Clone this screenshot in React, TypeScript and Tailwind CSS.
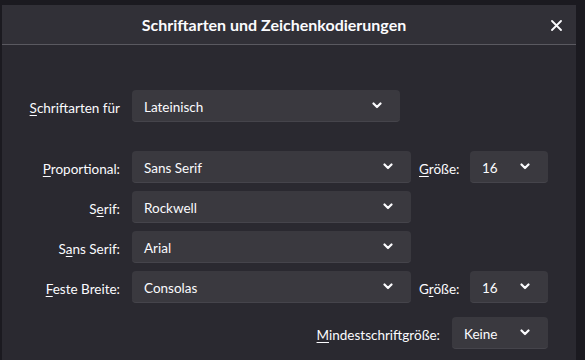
import React from "react";

function Chevron() {
  return (
    <svg width="10" height="7" viewBox="0 0 10 7" className="shrink-0">
      <polyline points="1.5,1.5 5,5 8.5,1.5" fill="none" stroke="#fbfbfe" strokeWidth="2.2" strokeLinecap="round" strokeLinejoin="round" />
    </svg>
  );
}

function Select({ value, w }: { value: string; w: string }) {
  return (
    <div className={`${w} h-[32px] shrink-0 flex items-center justify-between pl-[12px] pr-[18px] bg-[#3a393f] rounded-[4px] border-b border-[#45444b] text-[#fbfbfe]`}>
      <span className="pt-[4px]">{value}</span>
      <Chevron />
    </div>
  );
}

function U({ children }: { children: React.ReactNode }) {
  return <span className="underline underline-offset-[2px] decoration-[1px]">{children}</span>;
}

export default function App() {
  return (
    <div
      className="w-[585px] h-[360px] bg-[#1b1a20] overflow-hidden text-[13.5px] text-[#fbfbfe]"
      style={{ fontFamily: 'Lato, "Noto Sans", sans-serif' }}
    >
      <div className="ml-[2px] mt-[5px] w-[574px] h-[355px] bg-[#2a2930] flex flex-col">
        <div className="h-[40px] shrink-0 relative flex items-center justify-center pr-[30px] bg-[#313037] border-b border-[#5a5960]">
          <span className="text-[16px] font-bold pt-[1px]">Schriftarten und Zeichenkodierungen</span>
          <svg className="absolute right-[14px] top-[15px]" width="11" height="11" viewBox="0 0 11 11">
            <path d="M1 1L10 10M10 1L1 10" stroke="#fbfbfe" strokeWidth="1.8" strokeLinecap="round" />
          </svg>
        </div>
        <div className="flex flex-col pt-[45px]">
          <div className="flex items-center gap-[12px]">
            <div className="w-[118px] text-right pt-[4px]"><U>S</U>chriftarten für</div>
            <Select value="Lateinisch" w="w-[268px]" />
          </div>
          <div className="flex flex-col gap-[8px] mt-[29px]">
            <div className="flex items-center">
              <div className="w-[118px] text-right mr-[12px] pt-[4px]"><U>P</U>roportional:</div>
              <Select value="Sans Serif" w="w-[279px]" />
              <div className="ml-[8px] w-[51px] pt-[4px]"><U>G</U>röße:</div>
              <Select value="16" w="w-[78px]" />
            </div>
            <div className="flex items-center">
              <div className="w-[118px] text-right mr-[12px] pt-[4px]">S<U>e</U>rif:</div>
              <Select value="Rockwell" w="w-[279px]" />
            </div>
            <div className="flex items-center">
              <div className="w-[118px] text-right mr-[12px] pt-[4px]">S<U>a</U>ns Serif:</div>
              <Select value="Arial" w="w-[279px]" />
            </div>
            <div className="flex items-center">
              <div className="w-[118px] text-right mr-[12px] pt-[4px]"><U>F</U>este Breite:</div>
              <Select value="Consolas" w="w-[279px]" />
              <div className="ml-[8px] w-[51px] pt-[4px]">G<U>r</U>öße:</div>
              <Select value="16" w="w-[78px]" />
            </div>
          </div>
          <div className="flex items-center justify-end gap-[12px] pr-[28px] mt-[14px]">
            <div className="pt-[4px]"><U>M</U>indestschriftgröße:</div>
            <Select value="Keine" w="w-[96px]" />
          </div>
        </div>
      </div>
    </div>
  );
}
